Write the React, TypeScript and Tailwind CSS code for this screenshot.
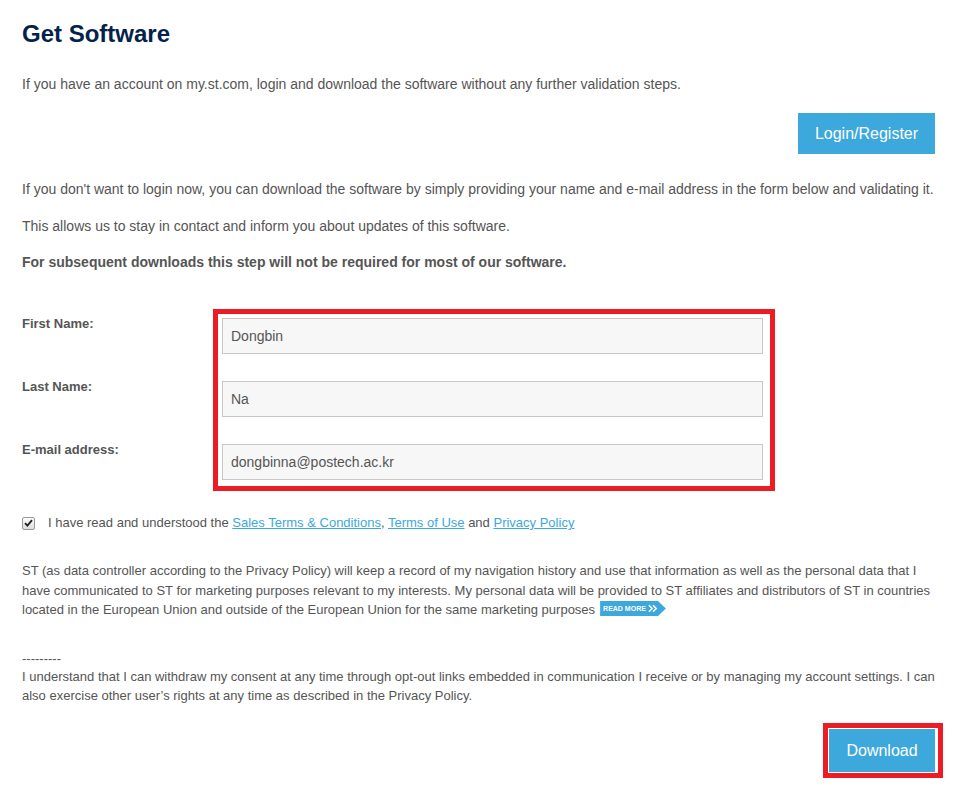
import React from "react";

function Check() {
  return (
    <span className="relative inline-flex h-[13px] w-[13px] shrink-0 items-center justify-center rounded-[2px] border border-[#999] bg-gradient-to-b from-[#fdfdfd] to-[#dcdcdc]">
      <svg width="9" height="8" viewBox="0 0 9 8">
        <path d="M1 4.2 L3.4 6.6 L8 1.2" fill="none" stroke="#222" strokeWidth="1.8" />
      </svg>
    </span>
  );
}

function ReadMore() {
  return (
    <span className="ml-[5px] inline-flex h-[15px] items-center gap-[2px] bg-[#3ca8db] pl-[3px] pr-[8px] align-[3px] text-[7px] font-bold leading-none text-white [clip-path:polygon(0_0,88%_0,100%_50%,88%_100%,0_100%)]">
      <span>READ MORE</span>
      <svg width="10" height="9" viewBox="0 0 11 9">
        <path d="M1 1 L4.5 4.5 L1 8 M5.5 1 L9 4.5 L5.5 8" fill="none" stroke="#fff" strokeWidth="1.7" />
      </svg>
    </span>
  );
}

export default function App() {
  const labels = ["First Name:", "Last Name:", "E-mail address:"];
  const values = ["Dongbin", "Na", "dongbinna@postech.ac.kr"];
  return (
    <div className="min-h-[791px] bg-white pl-[22px] pr-[20px] pt-[20px] text-[14px] text-[#555] [font-family:'Liberation_Sans',Arial,sans-serif]">
      <h1 className="text-[24px] font-bold leading-[28px] text-[#03234b]">Get Software</h1>
      <p className="mt-[26px] leading-[20px]">
        If you have an account on my.st.com, login and download the software without any further validation steps.
      </p>
      <div className="mt-[19px] flex justify-end">
        <button className="h-[41px] w-[137px] bg-[#3ca8db] text-[16px] text-white">Login/Register</button>
      </div>
      <p className="mt-[25px] leading-[20px]">
        If you don't want to login now, you can download the software by simply providing your name and e-mail address in the form below and validating it.
      </p>
      <p className="mt-[17px] leading-[20px]">This allows us to stay in contact and inform you about updates of this software.</p>
      <p className="mt-[16px] font-bold leading-[20px]">For subsequent downloads this step will not be required for most of our software.</p>

      <div className="mt-[37px] flex items-start">
        <div className="w-[191px] pt-[5px] text-[13px] font-bold">
          {labels.map((l) => (
            <div key={l} className="h-[63px] leading-[20px] last:h-[20px]">
              {l}
            </div>
          ))}
        </div>
        <div className="flex w-[562px] flex-col gap-[27px] border-[5px] border-[#ed1c24] pb-[6px] pl-[4px] pr-[7px] pt-[4px]">
          {values.map((v) => (
            <div key={v} className="flex h-[36px] items-center border border-[#c8c8c8] bg-[#f7f7f7] pl-[8px] text-[14px] text-[#555]">
              {v}
            </div>
          ))}
        </div>
      </div>

      <div className="mt-[22px] flex h-[20px] items-center text-[13px] leading-[20px]">
        <Check />
        <span className="ml-[13px]">
          I have read and understood the{" "}
          <a className="text-[#3ca8db] underline">Sales Terms &amp; Conditions</a>,{" "}
          <a className="text-[#3ca8db] underline">Terms of Use</a> and{" "}
          <a className="text-[#3ca8db] underline">Privacy Policy</a>
        </span>
      </div>

      <p className="mt-[28px] text-[13px] leading-[19.5px]">
        ST (as data controller according to the Privacy Policy) will keep a record of my navigation history and use that information as well as the personal data that I have communicated to ST for marketing purposes relevant to my interests. My personal data will be provided to ST affiliates and distributors of ST in countries located in the European Union and outside of the European Union for the same marketing purposes
        <ReadMore />
      </p>

      <p className="mt-[30px] text-[13px] leading-[18.5px]">
        ---------
        <br />
        I understand that I can withdraw my consent at any time through opt-out links embedded in communication I receive or by managing my account settings. I can also exercise other user’s rights at any time as described in the Privacy Policy.
      </p>

      <div className="mt-[18px] flex justify-end">
        <div className="-mr-[8px] border-[5px] border-[#ed1c24] bg-white p-[1px] pr-[3px]">
          <button className="h-[43px] w-[106px] bg-[#3ca8db] text-[16px] text-white">Download</button>
        </div>
      </div>
    </div>
  );
}
